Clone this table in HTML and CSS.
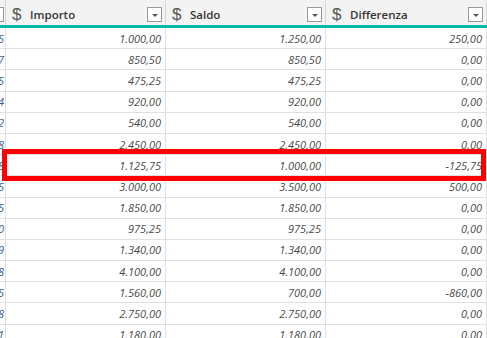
FILE: index.html
```html
<!DOCTYPE html>
<html>
<head>
<meta charset="utf-8">
<link rel="stylesheet" href="styles.css">
</head>
<body>
<div class="table">
  <div class="head">
    <div class="hcell stub"><span class="dd"></span></div>
    <div class="hcell"><span class="cur">$</span><span class="title">Importo</span><span class="dd"></span></div>
    <div class="hcell"><span class="cur">$</span><span class="title">Saldo</span><span class="dd"></span></div>
    <div class="hcell"><span class="cur">$</span><span class="title">Differenza</span><span class="dd"></span></div>
  </div>
  <div class="body">
    <div class="row"><div class="c s">45</div><div class="c">1.000,00</div><div class="c">1.250,00</div><div class="c">250,00</div></div>
    <div class="row"><div class="c s">47</div><div class="c">850,50</div><div class="c">850,50</div><div class="c">0,00</div></div>
    <div class="row"><div class="c s">45</div><div class="c">475,25</div><div class="c">475,25</div><div class="c">0,00</div></div>
    <div class="row"><div class="c s">44</div><div class="c">920,00</div><div class="c">920,00</div><div class="c">0,00</div></div>
    <div class="row"><div class="c s">42</div><div class="c">540,00</div><div class="c">540,00</div><div class="c">0,00</div></div>
    <div class="row"><div class="c s">48</div><div class="c">2.450,00</div><div class="c">2.450,00</div><div class="c">0,00</div></div>
    <div class="row"><div class="c s">48</div><div class="c">1.125,75</div><div class="c">1.000,00</div><div class="c">-125,75</div></div>
    <div class="row"><div class="c s">45</div><div class="c">3.000,00</div><div class="c">3.500,00</div><div class="c">500,00</div></div>
    <div class="row"><div class="c s">45</div><div class="c">1.850,00</div><div class="c">1.850,00</div><div class="c">0,00</div></div>
    <div class="row"><div class="c s">40</div><div class="c">975,25</div><div class="c">975,25</div><div class="c">0,00</div></div>
    <div class="row"><div class="c s">49</div><div class="c">1.340,00</div><div class="c">1.340,00</div><div class="c">0,00</div></div>
    <div class="row"><div class="c s">48</div><div class="c">4.100,00</div><div class="c">4.100,00</div><div class="c">0,00</div></div>
    <div class="row"><div class="c s">45</div><div class="c">1.560,00</div><div class="c">700,00</div><div class="c">-860,00</div></div>
    <div class="row"><div class="c s">48</div><div class="c">2.750,00</div><div class="c">2.750,00</div><div class="c">0,00</div></div>
    <div class="row"><div class="c s">41</div><div class="c">1.180,00</div><div class="c">1.180,00</div><div class="c">0,00</div></div>
  </div>
  <div class="highlight"></div>
</div>
</body>
</html>
```

FILE: styles.css
```css
html, body {
  margin: 0;
  padding: 0;
  background: #ffffff;
  width: 487px;
  height: 338px;
  overflow: hidden;
}

.table {
  position: relative;
  font-family: "Open Sans", "Liberation Sans", sans-serif;
}

.head {
  display: grid;
  grid-template-columns: 6px 160px 160px 161px;
  height: 25px;
  background: #f3f3f3;
  border-bottom: 3px solid #01b8aa;
}

.hcell {
  display: flex;
  align-items: center;
  border-right: 1px solid #d6d6d6;
  padding-left: 6px;
  padding-top: 3px;
  box-sizing: border-box;
  overflow: hidden;
  position: relative;
}

.hcell.stub {
  padding-left: 0;
  justify-content: flex-end;
}

.hcell.stub .dd {
  margin-right: 1px;
}

.cur {
  font-family: "Liberation Sans", sans-serif;
  font-size: 17px;
  color: #555;
  width: 11px;
  margin-right: 7px;
  line-height: 1;
}

.title {
  font-size: 11.5px;
  font-weight: 600;
  color: #333;
  flex: 1;
}

.dd {
  width: 13px;
  height: 13px;
  border: 1px solid #9a9a9a;
  background: #fff;
  margin-right: 3px;
  flex: none;
  position: relative;
}

.dd::after {
  content: "";
  position: absolute;
  left: 4px;
  top: 6px;
  border-left: 3px solid transparent;
  border-right: 3px solid transparent;
  border-top: 3px solid #555;
}

.body {
  display: grid;
  grid-auto-rows: 21.2px;
}

.row {
  display: grid;
  grid-template-columns: 6px 160px 160px 161px;
}

.c {
  border-right: 1px solid #e0e0e0;
  border-bottom: 1px solid #e0e0e0;
  font-size: 11px;
  font-style: italic;
  color: #4a4a4a;
  text-align: right;
  padding-right: 4px;
  display: flex;
  align-items: center;
  justify-content: flex-end;
  white-space: nowrap;
  overflow: hidden;
}

.c.s {
  padding-right: 1px;
  color: #3d5c8c;
}

.highlight {
  position: absolute;
  left: 2px;
  top: 149px;
  width: 484px;
  height: 32px;
  border: 5px solid #ff0000;
  box-sizing: border-box;
}
```
